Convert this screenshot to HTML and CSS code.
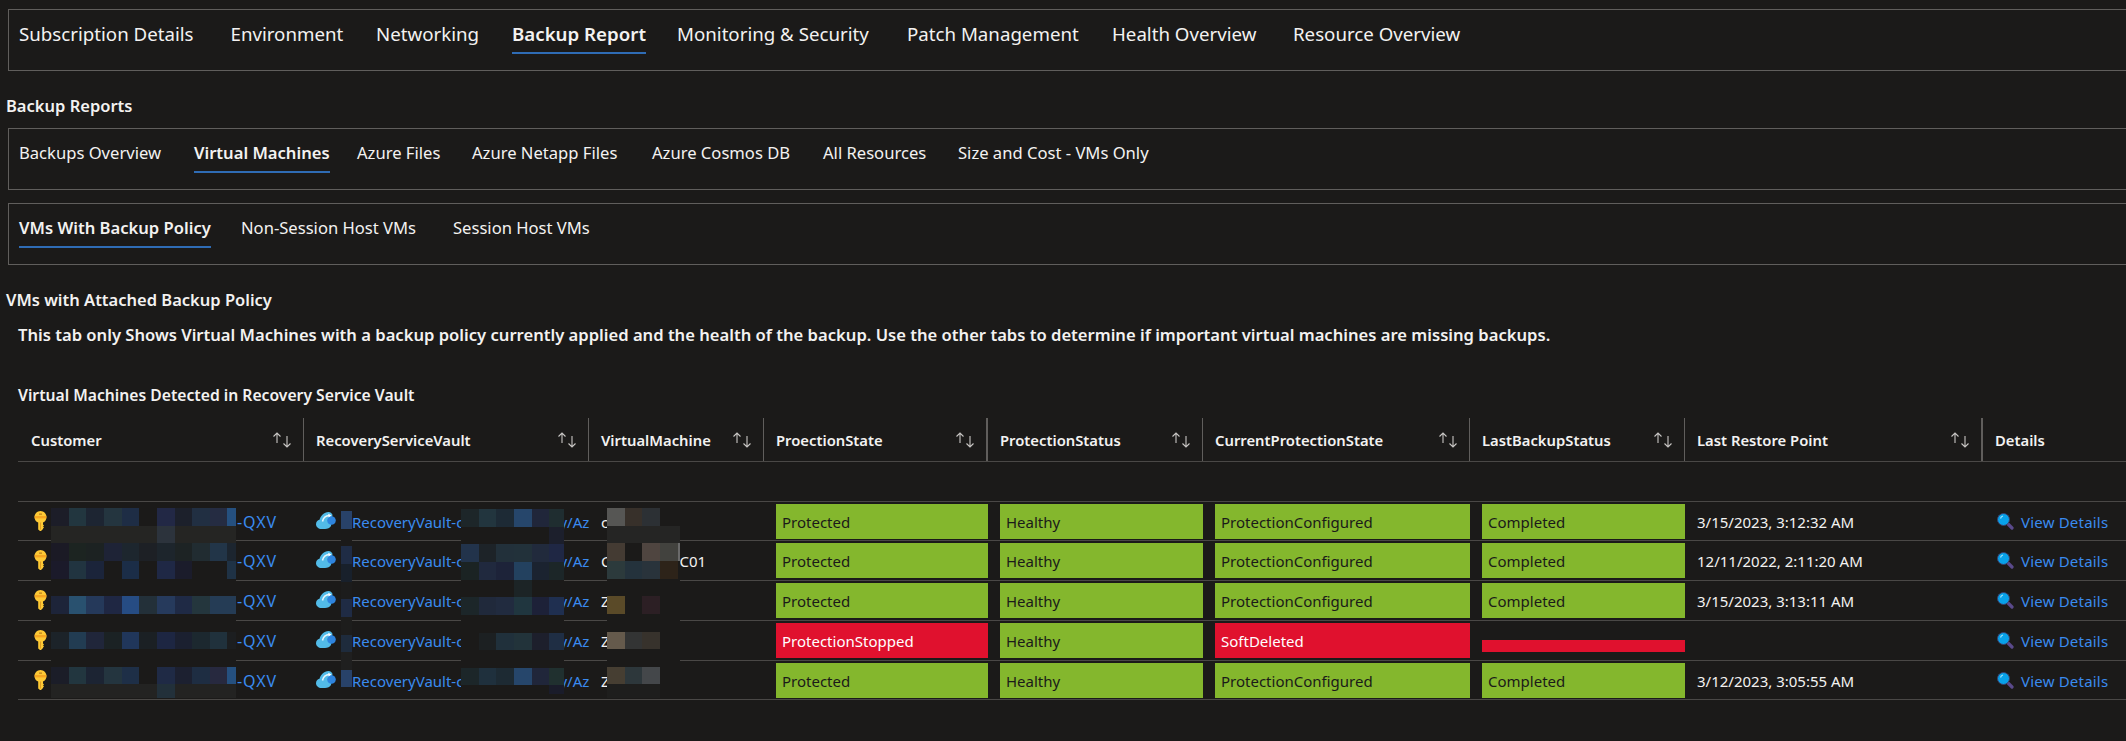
FILE: index.html
```html
<!DOCTYPE html>
<html lang="en">
<head>
<meta charset="utf-8">
<title>Backup Report</title>
<link rel="stylesheet" href="styles.css">
</head>
<body>
<svg class="defs" width="0" height="0" aria-hidden="true">
  <symbol id="i-sort" viewBox="0 0 20 16">
    <path d="M5 11V1M1.5 4.5 5 1l3.500 3.500M15 4v11M11.500 11.500 15 15l3.500-3.500" fill="none" stroke="#c8c6c4" stroke-width="1.100"/>
  </symbol>
  <symbol id="i-key" viewBox="0 0 13 20">
    <path d="M6.500 0C9.800 0 12.500 2.800 12.500 6C12.500 8.600 11.100 10.600 9 11.500V13.500L10 14.500 9 15.500 10 16.500 9 17.500V18L7 20H6L4.200 18.500V11.500C1.900 10.600.5 8.600.5 6 .5 2.800 3.200 0 6.500 0z" fill="#fdc935"/>
    <path d="M.7 5h11.600v2.400H.7z" fill="#f5a623"/>
    <path d="M5 2.600h3v1H5z" fill="#a8701a"/>
    <path d="M6.500 11.500v7" stroke="#e09f24" stroke-width="1"/>
  </symbol>
  <symbol id="i-vault" viewBox="0 0 20 17">
    <path d="M5.500 17C2.500 17 0 14.800 0 12.200 0 10 1.500 8.300 3.500 7.800 4.500 4 8 .3 12.500 0c1.800.2 3.300 1.200 4 2.800L15 14c-1 2-3.500 3-6 3z" fill="#52bbe8"/>
    <circle cx="15.500" cy="8.500" r="4.300" fill="#2e84de"/>
    <path d="M6.500 9.500C7.300 6 10 3.800 13.200 3.600" fill="none" stroke="#e8f6fd" stroke-width="1.500"/>
    <path d="M12.300 1.800 15.500 3.600 12.600 5.600z" fill="#fff"/>
  </symbol>
  <symbol id="i-search" viewBox="0 0 17 17">
    <path d="M9.500 9.500 15 15" stroke="#5a4a8c" stroke-width="3.200" stroke-linecap="round"/>
    <circle cx="6.500" cy="6.500" r="6" fill="#08a2ea" stroke="#3a3f6a" stroke-width="1"/>
    <path d="M3.500 5.500A3.500 3.500 0 0 1 6 3" fill="none" stroke="#9be2fb" stroke-width="1.200"/>
  </symbol>
</svg>

<main class="page">
  <nav class="box tabs tabs-main">
    <a class="tab">Subscription Details</a>
    <a class="tab">Environment</a>
    <a class="tab">Networking</a>
    <a class="tab active">Backup Report</a>
    <a class="tab">Monitoring &amp; Security</a>
    <a class="tab">Patch Management</a>
    <a class="tab">Health Overview</a>
    <a class="tab">Resource Overview</a>
  </nav>

  <h2 class="section-title title-reports">Backup Reports</h2>

  <nav class="box tabs tabs-sub tabs-reports">
    <a class="tab">Backups Overview</a>
    <a class="tab active">Virtual Machines</a>
    <a class="tab">Azure Files</a>
    <a class="tab">Azure Netapp Files</a>
    <a class="tab">Azure Cosmos DB</a>
    <a class="tab">All Resources</a>
    <a class="tab">Size and Cost - VMs Only</a>
  </nav>

  <nav class="box tabs tabs-sub tabs-vms">
    <a class="tab active">VMs With Backup Policy</a>
    <a class="tab">Non-Session Host VMs</a>
    <a class="tab">Session Host VMs</a>
  </nav>

  <h2 class="section-title title-vms">VMs with Attached Backup Policy</h2>
  <p class="intro">This tab only Shows Virtual Machines with a backup policy currently applied and the health of the backup. Use the other tabs to determine if important virtual machines are missing backups.</p>
  <h3 class="grid-title">Virtual Machines Detected in Recovery Service Vault</h3>

  <table class="grid">
    <colgroup>
      <col class="c-customer"><col class="c-vault"><col class="c-vm"><col class="c-state"><col class="c-status"><col class="c-current"><col class="c-last"><col class="c-restore"><col class="c-details">
    </colgroup>
    <thead>
      <tr>
        <th class="th-first"><div class="th"><span>Customer</span><svg class="sort"><use href="#i-sort"/></svg></div></th>
        <th><div class="th"><span>RecoveryServiceVault</span><svg class="sort"><use href="#i-sort"/></svg></div></th>
        <th><div class="th"><span>VirtualMachine</span><svg class="sort"><use href="#i-sort"/></svg></div></th>
        <th class="th-resizer"><div class="th"><span>ProectionState</span><svg class="sort"><use href="#i-sort"/></svg></div></th>
        <th><div class="th"><span>ProtectionStatus</span><svg class="sort"><use href="#i-sort"/></svg></div></th>
        <th><div class="th"><span>CurrentProtectionState</span><svg class="sort"><use href="#i-sort"/></svg></div></th>
        <th><div class="th"><span>LastBackupStatus</span><svg class="sort"><use href="#i-sort"/></svg></div></th>
        <th class="th-resizer"><div class="th"><span>Last Restore Point</span><svg class="sort"><use href="#i-sort"/></svg></div></th>
        <th class="th-last"><div class="th"><span>Details</span></div></th>
      </tr>
    </thead>
    <tbody>
      <tr class="spacer"><td colspan="9"></td></tr>
      <tr class="row-short">
        <td><a class="res res-customer"><svg class="i-key"><use href="#i-key"/></svg><span class="gap-customer"></span>-QXV</a></td>
        <td><a class="res res-vault"><svg class="i-vault"><use href="#i-vault"/></svg><span class="gap-vault-a"></span>RecoveryVault-c<span class="gap-vault-b"></span>y/Az</a></td>
        <td class="txt">c</td>
        <td><div class="fill ok">Protected</div></td>
        <td><div class="fill ok">Healthy</div></td>
        <td><div class="fill ok">ProtectionConfigured</div></td>
        <td><div class="fill ok">Completed</div></td>
        <td class="txt">3/15/2023, 3:12:32 AM</td>
        <td><a class="view"><svg class="i-search"><use href="#i-search"/></svg>View Details</a></td>
      </tr>
      <tr>
        <td><a class="res res-customer"><svg class="i-key"><use href="#i-key"/></svg><span class="gap-customer"></span>-QXV</a></td>
        <td><a class="res res-vault"><svg class="i-vault"><use href="#i-vault"/></svg><span class="gap-vault-a"></span>RecoveryVault-c<span class="gap-vault-b"></span>y/Az</a></td>
        <td class="txt">C<span class="gap-vm"></span>C01</td>
        <td><div class="fill ok">Protected</div></td>
        <td><div class="fill ok">Healthy</div></td>
        <td><div class="fill ok">ProtectionConfigured</div></td>
        <td><div class="fill ok">Completed</div></td>
        <td class="txt">12/11/2022, 2:11:20 AM</td>
        <td><a class="view"><svg class="i-search"><use href="#i-search"/></svg>View Details</a></td>
      </tr>
      <tr>
        <td><a class="res res-customer"><svg class="i-key"><use href="#i-key"/></svg><span class="gap-customer"></span>-QXV</a></td>
        <td><a class="res res-vault"><svg class="i-vault"><use href="#i-vault"/></svg><span class="gap-vault-a"></span>RecoveryVault-c<span class="gap-vault-b"></span>y/Az</a></td>
        <td class="txt">Z</td>
        <td><div class="fill ok">Protected</div></td>
        <td><div class="fill ok">Healthy</div></td>
        <td><div class="fill ok">ProtectionConfigured</div></td>
        <td><div class="fill ok">Completed</div></td>
        <td class="txt">3/15/2023, 3:13:11 AM</td>
        <td><a class="view"><svg class="i-search"><use href="#i-search"/></svg>View Details</a></td>
      </tr>
      <tr>
        <td><a class="res res-customer"><svg class="i-key"><use href="#i-key"/></svg><span class="gap-customer"></span>-QXV</a></td>
        <td><a class="res res-vault"><svg class="i-vault"><use href="#i-vault"/></svg><span class="gap-vault-a"></span>RecoveryVault-c<span class="gap-vault-b"></span>y/Az</a></td>
        <td class="txt">Z</td>
        <td><div class="fill bad">ProtectionStopped</div></td>
        <td><div class="fill ok">Healthy</div></td>
        <td><div class="fill bad">SoftDeleted</div></td>
        <td><div class="fill bad fill-empty"></div></td>
        <td class="txt"></td>
        <td><a class="view"><svg class="i-search"><use href="#i-search"/></svg>View Details</a></td>
      </tr>
      <tr class="row-short">
        <td><a class="res res-customer"><svg class="i-key"><use href="#i-key"/></svg><span class="gap-customer"></span>-QXV</a></td>
        <td><a class="res res-vault"><svg class="i-vault"><use href="#i-vault"/></svg><span class="gap-vault-a"></span>RecoveryVault-c<span class="gap-vault-b"></span>y/Az</a></td>
        <td class="txt">Z</td>
        <td><div class="fill ok">Protected</div></td>
        <td><div class="fill ok">Healthy</div></td>
        <td><div class="fill ok">ProtectionConfigured</div></td>
        <td><div class="fill ok">Completed</div></td>
        <td class="txt">3/12/2023, 3:05:55 AM</td>
        <td><a class="view"><svg class="i-search"><use href="#i-search"/></svg>View Details</a></td>
      </tr>
    </tbody>
  </table>

  <svg class="mosaic" viewBox="0 0 2126 741" width="2126" height="741" aria-hidden="true" shape-rendering="crispEdges">
    <rect x="51" y="502" width="185" height="196" fill="#1b1a19"/>
    <rect x="341" y="502" width="11" height="196" fill="#1b1a19"/>
    <rect x="461" y="502" width="103" height="196" fill="#1b1a19"/>
    <rect x="607" y="502" width="73" height="196" fill="#1b1a19"/>

    <rect x="51" y="508" width="18" height="18" fill="#1c1d28"/><rect x="69" y="508" width="17" height="18" fill="#22363f"/><rect x="86" y="508" width="18" height="18" fill="#1d2532"/><rect x="104" y="508" width="18" height="18" fill="#24353f"/><rect x="122" y="508" width="17" height="18" fill="#1e2d45"/><rect x="157" y="508" width="18" height="18" fill="#222845"/><rect x="175" y="508" width="17" height="18" fill="#1c202b"/><rect x="192" y="508" width="18" height="18" fill="#212f42"/><rect x="210" y="508" width="17" height="18" fill="#252c42"/><rect x="227" y="508" width="9" height="18" fill="#25507f"/>
    <rect x="51" y="526" width="185" height="17" fill="#252523"/><rect x="157" y="526" width="18" height="17" fill="#2c333c"/>

    <rect x="51" y="543" width="18" height="18" fill="#1b1a25"/><rect x="69" y="543" width="17" height="18" fill="#1c2421"/><rect x="86" y="543" width="18" height="18" fill="#1c2222"/><rect x="104" y="543" width="18" height="18" fill="#1e2336"/><rect x="122" y="543" width="17" height="18" fill="#1d262e"/><rect x="139" y="543" width="18" height="18" fill="#1d2025"/><rect x="157" y="543" width="18" height="18" fill="#1d252c"/><rect x="175" y="543" width="17" height="18" fill="#1d2324"/><rect x="192" y="543" width="18" height="18" fill="#212c31"/><rect x="210" y="543" width="17" height="18" fill="#223548"/><rect x="227" y="543" width="9" height="18" fill="#1c252f"/>
    <rect x="51" y="561" width="18" height="18" fill="#1b1a2a"/><rect x="69" y="561" width="17" height="18" fill="#213440"/><rect x="86" y="561" width="18" height="18" fill="#1b243a"/><rect x="122" y="561" width="17" height="18" fill="#1b2d47"/><rect x="157" y="561" width="18" height="18" fill="#1f2845"/><rect x="175" y="561" width="17" height="18" fill="#1b1c2b"/><rect x="227" y="561" width="9" height="18" fill="#1f3245"/>

    <rect x="51" y="596" width="18" height="18" fill="#1d2439"/><rect x="69" y="596" width="17" height="18" fill="#29516f"/><rect x="86" y="596" width="18" height="18" fill="#25395a"/><rect x="104" y="596" width="18" height="18" fill="#1f2743"/><rect x="122" y="596" width="17" height="18" fill="#264c83"/><rect x="139" y="596" width="18" height="18" fill="#233039"/><rect x="157" y="596" width="18" height="18" fill="#263a5c"/><rect x="175" y="596" width="17" height="18" fill="#1f2a45"/><rect x="192" y="596" width="18" height="18" fill="#24363d"/><rect x="210" y="596" width="26" height="18" fill="#253c55"/>

    <rect x="51" y="632" width="18" height="17" fill="#1c2329"/><rect x="69" y="632" width="17" height="17" fill="#223c52"/><rect x="86" y="632" width="18" height="17" fill="#20263a"/><rect x="104" y="632" width="18" height="17" fill="#1b2224"/><rect x="122" y="632" width="17" height="17" fill="#20365a"/><rect x="139" y="632" width="18" height="17" fill="#1b2024"/><rect x="157" y="632" width="18" height="17" fill="#1d2642"/><rect x="175" y="632" width="17" height="17" fill="#1b2030"/><rect x="192" y="632" width="18" height="17" fill="#1c282f"/><rect x="210" y="632" width="17" height="17" fill="#20313c"/><rect x="227" y="632" width="9" height="17" fill="#1c1e20"/>

    <rect x="51" y="667" width="18" height="17" fill="#1b1d28"/><rect x="69" y="667" width="17" height="17" fill="#22363f"/><rect x="86" y="667" width="18" height="17" fill="#1c2433"/><rect x="104" y="667" width="18" height="17" fill="#24353f"/><rect x="122" y="667" width="17" height="17" fill="#1e2f47"/><rect x="157" y="667" width="18" height="17" fill="#1f2a45"/><rect x="175" y="667" width="17" height="17" fill="#1c2030"/><rect x="192" y="667" width="18" height="17" fill="#1e2d42"/><rect x="210" y="667" width="17" height="17" fill="#27293f"/><rect x="227" y="667" width="9" height="17" fill="#25507f"/>
    <rect x="51" y="684" width="185" height="14" fill="#232322"/><rect x="157" y="684" width="18" height="14" fill="#22303a"/>

    <rect x="341" y="511" width="11" height="18" fill="#284269"/><rect x="341" y="546" width="11" height="18" fill="#1f2c45"/><rect x="341" y="564" width="11" height="18" fill="#18202b"/><rect x="341" y="582" width="11" height="17" fill="#1c1c1c"/><rect x="341" y="599" width="11" height="18" fill="#1f2b44"/><rect x="341" y="617" width="11" height="18" fill="#1d1d1c"/><rect x="341" y="635" width="11" height="17" fill="#1e2b3c"/><rect x="341" y="652" width="11" height="18" fill="#1f1f1f"/><rect x="341" y="670" width="11" height="17" fill="#284269"/>

    <rect x="461" y="509" width="18" height="18" fill="#1d2629"/><rect x="479" y="509" width="17" height="18" fill="#22353e"/><rect x="496" y="509" width="18" height="18" fill="#1d2a35"/><rect x="514" y="509" width="18" height="18" fill="#26466b"/><rect x="532" y="509" width="17" height="18" fill="#20263a"/><rect x="549" y="509" width="15" height="18" fill="#1f2d30"/>
    <rect x="549" y="527" width="15" height="17" fill="#1c1f2c"/>
    <rect x="461" y="544" width="18" height="18" fill="#22334b"/><rect x="479" y="544" width="17" height="18" fill="#1d2328"/><rect x="496" y="544" width="18" height="18" fill="#22303a"/><rect x="514" y="544" width="18" height="18" fill="#22313a"/><rect x="532" y="544" width="17" height="18" fill="#212a3c"/><rect x="549" y="544" width="15" height="18" fill="#1f2744"/>
    <rect x="461" y="562" width="18" height="18" fill="#1b2323"/><rect x="479" y="562" width="17" height="18" fill="#20293e"/><rect x="496" y="562" width="18" height="18" fill="#1d2339"/><rect x="514" y="562" width="18" height="18" fill="#23415f"/><rect x="532" y="562" width="17" height="18" fill="#1b2330"/><rect x="549" y="562" width="15" height="18" fill="#1c2628"/>
    <rect x="514" y="580" width="18" height="17" fill="#1c2426"/>
    <rect x="461" y="597" width="18" height="18" fill="#1c2629"/><rect x="479" y="597" width="17" height="18" fill="#20293b"/><rect x="496" y="597" width="18" height="18" fill="#212b3f"/><rect x="514" y="597" width="18" height="18" fill="#20363f"/><rect x="532" y="597" width="17" height="18" fill="#1d2138"/><rect x="549" y="597" width="15" height="18" fill="#1f2f50"/>
    <rect x="479" y="633" width="17" height="17" fill="#1c2022"/><rect x="496" y="633" width="18" height="17" fill="#20303b"/><rect x="514" y="633" width="18" height="17" fill="#22333a"/><rect x="532" y="633" width="17" height="17" fill="#1d1f2c"/><rect x="549" y="633" width="15" height="17" fill="#1f2e44"/>
    <rect x="461" y="668" width="18" height="17" fill="#1c2629"/><rect x="479" y="668" width="17" height="17" fill="#1f303d"/><rect x="496" y="668" width="18" height="17" fill="#1d2a33"/><rect x="514" y="668" width="18" height="17" fill="#26466b"/><rect x="532" y="668" width="17" height="17" fill="#20263a"/><rect x="549" y="668" width="15" height="17" fill="#20302f"/>
    <rect x="549" y="685" width="15" height="9" fill="#1a1c2a"/>

    <rect x="607" y="508" width="18" height="18" fill="#565654"/><rect x="625" y="508" width="17" height="18" fill="#37302a"/><rect x="642" y="508" width="18" height="18" fill="#2c3034"/>
    <rect x="607" y="526" width="73" height="17" fill="#252524"/>
    <rect x="607" y="543" width="18" height="18" fill="#443b33"/><rect x="642" y="543" width="18" height="18" fill="#4f4540"/><rect x="660" y="543" width="18" height="18" fill="#42423e"/><rect x="678" y="543" width="2" height="18" fill="#6a6a6a"/>
    <rect x="607" y="561" width="18" height="18" fill="#2c3a3c"/><rect x="625" y="561" width="17" height="18" fill="#24323c"/><rect x="642" y="561" width="18" height="18" fill="#29333b"/><rect x="660" y="561" width="18" height="18" fill="#2d2319"/>
    <rect x="607" y="596" width="18" height="18" fill="#5a4a28"/><rect x="642" y="596" width="18" height="18" fill="#2c1f24"/>
    <rect x="607" y="632" width="18" height="17" fill="#655a4c"/><rect x="625" y="632" width="17" height="17" fill="#333434"/><rect x="642" y="632" width="18" height="17" fill="#37322c"/>
    <rect x="607" y="667" width="18" height="17" fill="#463e32"/><rect x="625" y="667" width="17" height="17" fill="#2d373b"/><rect x="642" y="667" width="18" height="17" fill="#44474a"/>
    <rect x="607" y="684" width="53" height="14" fill="#1e1e1d"/>
  </svg>
</main>
</body>
</html>
```

FILE: styles.css
```css
* { box-sizing: border-box; }

html, body {
  margin: 0;
  height: 100%;
  overflow: hidden;
  background: #1b1a19;
}

body {
  color: #f3f2f1;
  font-family: "Noto Sans", "Open Sans", sans-serif;
}

.defs { position: absolute; }

.page {
  position: relative;
  width: 2126px;
  height: 741px;
  padding-top: 9px;
  overflow: hidden;
}

.box {
  border: 1px solid #605e5c;
  margin-left: 8px;
  width: 2200px;
  height: 62px;
}

.tabs {
  display: grid;
  justify-content: start;
  align-items: start;
  padding-left: 10px;
}

.tab {
  display: block;
  justify-self: start;
  height: 44px;
  border-bottom: 2px solid transparent;
  white-space: nowrap;
}

.tab.active {
  font-weight: 600;
  border-bottom-color: #2f6cb5;
}

.tabs-main {
  grid-template-columns: 211.5px 145.5px 136px 165px 230px 205px 181px auto;
  font-size: 18.7px;
  line-height: 24px;
}
.tabs-main .tab { padding-top: 12px; }

.tabs-sub {
  font-size: 16.6px;
  line-height: 22px;
}
.tabs-sub .tab { padding-top: 13px; }

.tabs-reports { grid-template-columns: 175px 163px 115px 180px 171px 135px auto; }
.tabs-vms { grid-template-columns: 222px 212px auto; }

.section-title {
  margin: 0;
  font-size: 16.5px;
  font-weight: 600;
  line-height: 20px;
  padding-left: 6px;
}
.title-reports { margin-top: 25px; }
.tabs-reports { margin-top: 12px; }
.tabs-vms { margin-top: 13px; }
.title-vms { margin-top: 25px; }

.intro {
  margin: 15px 0 0;
  padding-left: 18px;
  font-size: 16.6px;
  font-weight: 600;
  line-height: 20px;
  white-space: nowrap;
}

.grid-title {
  margin: 40px 0 0;
  padding-left: 18px;
  font-size: 15.7px;
  font-weight: 600;
  line-height: 20px;
}

.grid {
  margin: 13px 0 0 18px;
  width: 2182px;
  table-layout: fixed;
  border-collapse: separate;
  border-spacing: 0;
  font-size: 15px;
}

.c-customer { width: 286px; }
.c-vault { width: 285px; }
.c-vm { width: 175px; }
.c-state { width: 224px; }
.c-status { width: 215px; }
.c-current { width: 267px; }
.c-last { width: 215px; }
.c-restore { width: 298px; }

.grid th {
  height: 44px;
  padding: 0;
  font-size: 14.8px;
  font-weight: 600;
  text-align: left;
  border-bottom: 1px solid #4a4846;
}

.th {
  display: flex;
  align-items: center;
  justify-content: space-between;
  height: 43px;
  padding: 0 11px 0 12px;
  border-right: 1px solid #605e5c;
}
.th-first .th { padding-left: 13px; }
.th-resizer .th { border-right-width: 2px; }
.th-last .th { border-right: 0; }

.sort {
  width: 20px;
  height: 16px;
  flex: none;
}

.grid td {
  height: 40px;
  padding: 2px 0 0 12px;
  vertical-align: top;
  border-bottom: 1px solid #4a4846;
}
.grid .row-short td { height: 39px; }
.grid .spacer td { height: 40px; padding: 0; }

.txt {
  line-height: 36px;
  white-space: nowrap;
}

.fill {
  height: 35px;
  padding-left: 6px;
  line-height: 36px;
}
.ok { background: #84b72d; color: #1b1a19; }
.bad { background: #e0112e; color: #ffffff; }
.fill-empty {
  height: 12px;
  margin-top: 17px;
}

.res {
  display: flex;
  align-items: center;
  height: 36px;
  line-height: 36px;
  color: #3a8bef;
  white-space: nowrap;
}
.res-customer {
  margin-left: 4px;
  font-size: 16px;
  letter-spacing: 0.9px;
}
.res-vault { width: 272px; }

.i-key {
  width: 13px;
  height: 20px;
  flex: none;
  margin-top: -3px;
}
.i-vault {
  width: 20px;
  height: 17px;
  flex: none;
  margin-top: -4px;
}
.gap-customer { display: block; flex: none; width: 190px; }
.gap-vault-a { display: block; flex: none; width: 16px; }
.gap-vault-b { display: block; flex: none; width: 96px; }
.gap-vm { display: inline-block; width: 69px; }

.view {
  display: flex;
  align-items: center;
  height: 36px;
  line-height: 36px;
  padding-left: 2px;
  color: #3a8bef;
  letter-spacing: 0.2px;
  white-space: nowrap;
}
.i-search {
  width: 17px;
  height: 17px;
  flex: none;
  margin: -1px 7px 0 0;
}

.mosaic {
  position: absolute;
  left: 0;
  top: 0;
  pointer-events: none;
}
```
